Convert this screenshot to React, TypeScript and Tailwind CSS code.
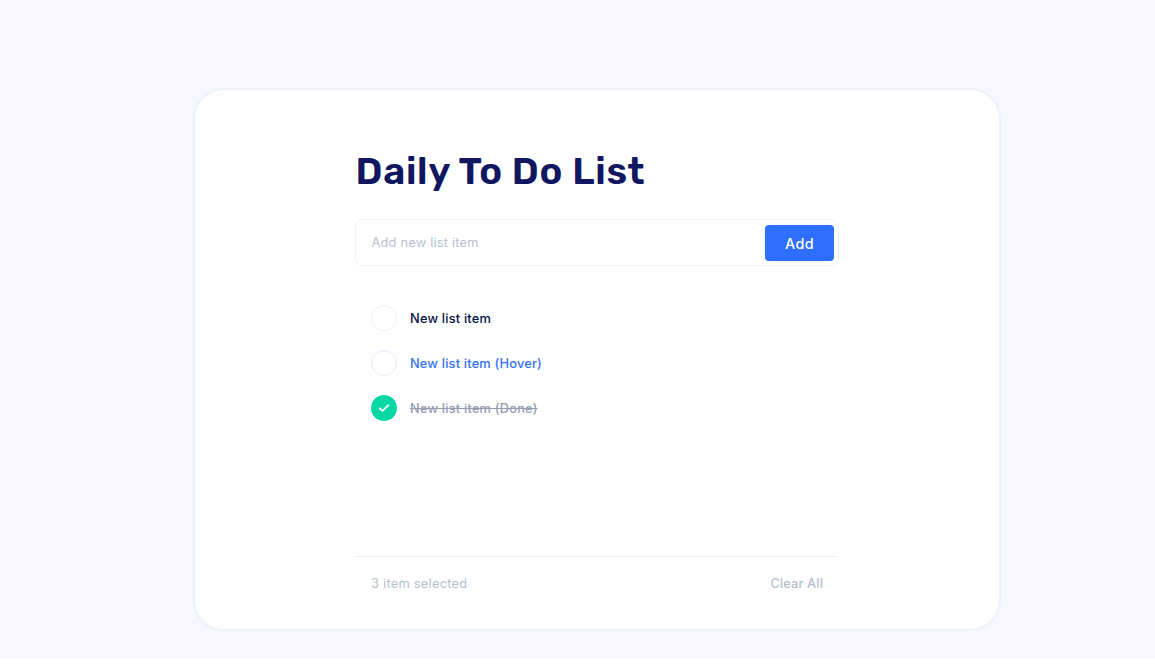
type Item = { label: string; state: 'idle' | 'hover' | 'done' };

const items: Item[] = [
  { label: 'New list item', state: 'idle' },
  { label: 'New list item (Hover)', state: 'hover' },
  { label: 'New list item (Done)', state: 'done' },
];

const textStyles = {
  idle: 'text-[#040f46] tracking-[0.2px]',
  hover: 'text-[#3471fa] tracking-[0.19px]',
  done: 'text-[#959db3] line-through tracking-[0.21px]',
};

const circleStyles = {
  idle: 'border border-[#f0f0f4] bg-white',
  hover: 'border border-[#e4ebfc] bg-white',
  done: 'bg-[#06d8a5]',
};

function TodoRow({ label, state }: Item) {
  return (
    <li className="flex h-[26px] items-center gap-[13px]">
      <span className={`flex size-[26px] shrink-0 items-center justify-center rounded-full ${circleStyles[state]}`}>
        {state === 'done' && (
          <svg width="12" height="10" viewBox="0 0 12 10" fill="none" stroke="white" strokeWidth="1.8" strokeLinecap="round" strokeLinejoin="round">
            <path d="M1.7 5.3 4.5 7.8 10.3 2.1" />
          </svg>
        )}
      </span>
      <span className={`pt-px text-[12.8px] leading-5 font-medium ${textStyles[state]}`}>{label}</span>
    </li>
  );
}

export default function App() {
  return (
    <div className="h-[666px] overflow-hidden bg-white font-['Inter','Liberation_Sans',sans-serif]">
      <div className="h-[658px] bg-[#f5f8ff] pt-[88px] pl-[193px]">
        <main className="flex h-[543px] w-[808px] flex-col rounded-[31px] border-2 border-[#edf1fa] bg-white px-[160px]">
          <h1 className="mt-[58px] h-[46px] pl-[0.5px] text-[38px] leading-[46px] font-semibold tracking-[0.72px] whitespace-nowrap text-[#10165f] font-['Rubik','Roboto',sans-serif]">
            Daily To Do List
          </h1>
          <div className="mt-[25px] flex h-[47px] w-[484px] shrink-0 items-center justify-between rounded-[7px] border border-[#f2f3f6] pr-1 pl-[15.5px]">
            <span className="pt-px text-[12.8px] leading-5 tracking-[0.21px] text-[#b5bfd3]">Add new list item</span>
            <button className="h-9 w-[69px] rounded-[4px] bg-[#2e6fff] pt-0.5 text-[14.3px] font-medium tracking-[0.4px] text-white">Add</button>
          </div>
          <ul className="mt-[39px] flex flex-col gap-[19px] pl-4">
            {items.map((item) => (
              <TodoRow key={item.label} {...item} />
            ))}
          </ul>
          <footer className="mt-[135px] flex h-[55px] w-[483px] items-center justify-between border-t border-[#eeeff2] pr-[15px] pl-4 text-[12.8px] text-[#b5bfd3]">
            <span className="tracking-[0.27px]">3 item selected</span>
            <span className="font-medium tracking-[0.13px]">Clear All</span>
          </footer>
        </main>
      </div>
    </div>
  );
}
